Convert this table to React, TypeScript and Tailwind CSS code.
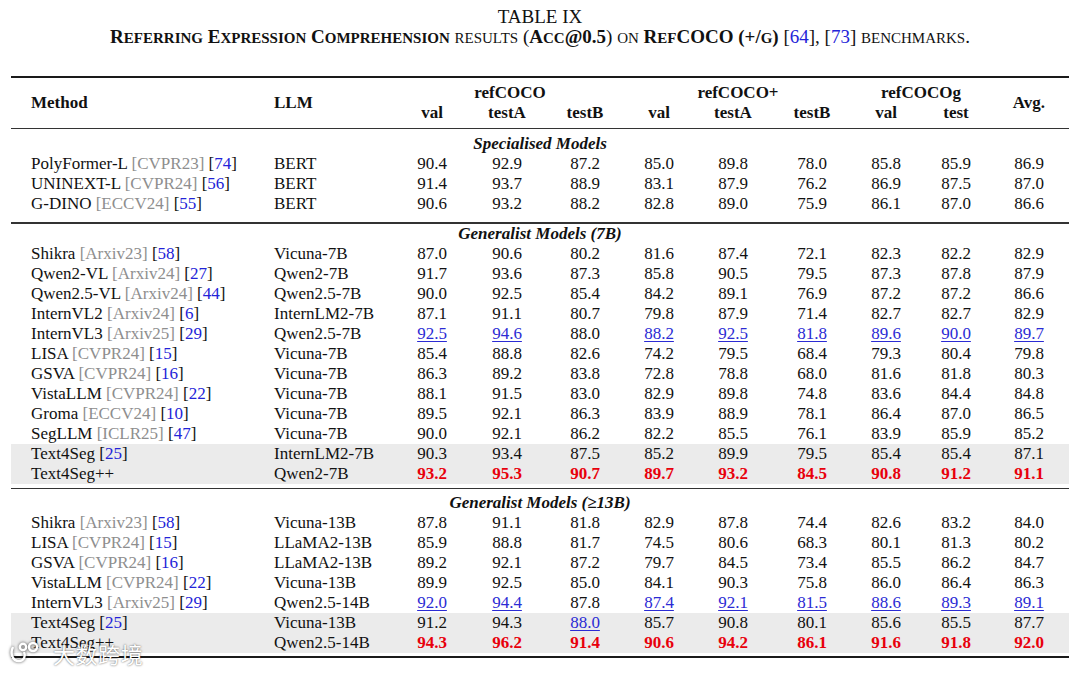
import React from 'react'

const GRID = 'grid grid-cols-[251px_133px_74px_76px_80px_68px_80px_78px_70px_70px_76px]'

type Row = {
  name: string
  venue?: string
  ref: string
  llm: string
  vals: string[]
  shade?: boolean
}

const specialised: Row[] = [
  { name: 'PolyFormer-L', venue: 'CVPR23', ref: '74', llm: 'BERT', vals: ['90.4', '92.9', '87.2', '85.0', '89.8', '78.0', '85.8', '85.9', '86.9'] },
  { name: 'UNINEXT-L', venue: 'CVPR24', ref: '56', llm: 'BERT', vals: ['91.4', '93.7', '88.9', '83.1', '87.9', '76.2', '86.9', '87.5', '87.0'] },
  { name: 'G-DINO', venue: 'ECCV24', ref: '55', llm: 'BERT', vals: ['90.6', '93.2', '88.2', '82.8', '89.0', '75.9', '86.1', '87.0', '86.6'] },
]

const general7b: Row[] = [
  { name: 'Shikra', venue: 'Arxiv23', ref: '58', llm: 'Vicuna-7B', vals: ['87.0', '90.6', '80.2', '81.6', '87.4', '72.1', '82.3', '82.2', '82.9'] },
  { name: 'Qwen2-VL', venue: 'Arxiv24', ref: '27', llm: 'Qwen2-7B', vals: ['91.7', '93.6', '87.3', '85.8', '90.5', '79.5', '87.3', '87.8', '87.9'] },
  { name: 'Qwen2.5-VL', venue: 'Arxiv24', ref: '44', llm: 'Qwen2.5-7B', vals: ['90.0', '92.5', '85.4', '84.2', '89.1', '76.9', '87.2', '87.2', '86.6'] },
  { name: 'InternVL2', venue: 'Arxiv24', ref: '6', llm: 'InternLM2-7B', vals: ['87.1', '91.1', '80.7', '79.8', '87.9', '71.4', '82.7', '82.7', '82.9'] },
  { name: 'InternVL3', venue: 'Arxiv25', ref: '29', llm: 'Qwen2.5-7B', vals: ['92.5u', '94.6u', '88.0', '88.2u', '92.5u', '81.8u', '89.6u', '90.0u', '89.7u'] },
  { name: 'LISA', venue: 'CVPR24', ref: '15', llm: 'Vicuna-7B', vals: ['85.4', '88.8', '82.6', '74.2', '79.5', '68.4', '79.3', '80.4', '79.8'] },
  { name: 'GSVA', venue: 'CVPR24', ref: '16', llm: 'Vicuna-7B', vals: ['86.3', '89.2', '83.8', '72.8', '78.8', '68.0', '81.6', '81.8', '80.3'] },
  { name: 'VistaLLM', venue: 'CVPR24', ref: '22', llm: 'Vicuna-7B', vals: ['88.1', '91.5', '83.0', '82.9', '89.8', '74.8', '83.6', '84.4', '84.8'] },
  { name: 'Groma', venue: 'ECCV24', ref: '10', llm: 'Vicuna-7B', vals: ['89.5', '92.1', '86.3', '83.9', '88.9', '78.1', '86.4', '87.0', '86.5'] },
  { name: 'SegLLM', venue: 'ICLR25', ref: '47', llm: 'Vicuna-7B', vals: ['90.0', '92.1', '86.2', '82.2', '85.5', '76.1', '83.9', '85.9', '85.2'] },
  { name: 'Text4Seg', ref: '25', llm: 'InternLM2-7B', shade: true, vals: ['90.3', '93.4', '87.5', '85.2', '89.9', '79.5', '85.4', '85.4', '87.1'] },
  { name: 'Text4Seg++', ref: '', llm: 'Qwen2-7B', shade: true, vals: ['93.2r', '95.3r', '90.7r', '89.7r', '93.2r', '84.5r', '90.8r', '91.2r', '91.1r'] },
]

const general13b: Row[] = [
  { name: 'Shikra', venue: 'Arxiv23', ref: '58', llm: 'Vicuna-13B', vals: ['87.8', '91.1', '81.8', '82.9', '87.8', '74.4', '82.6', '83.2', '84.0'] },
  { name: 'LISA', venue: 'CVPR24', ref: '15', llm: 'LLaMA2-13B', vals: ['85.9', '88.8', '81.7', '74.5', '80.6', '68.3', '80.1', '81.3', '80.2'] },
  { name: 'GSVA', venue: 'CVPR24', ref: '16', llm: 'LLaMA2-13B', vals: ['89.2', '92.1', '87.2', '79.7', '84.5', '73.4', '85.5', '86.2', '84.7'] },
  { name: 'VistaLLM', venue: 'CVPR24', ref: '22', llm: 'Vicuna-13B', vals: ['89.9', '92.5', '85.0', '84.1', '90.3', '75.8', '86.0', '86.4', '86.3'] },
  { name: 'InternVL3', venue: 'Arxiv25', ref: '29', llm: 'Qwen2.5-14B', vals: ['92.0u', '94.4u', '87.8', '87.4u', '92.1u', '81.5u', '88.6u', '89.3u', '89.1u'] },
  { name: 'Text4Seg', ref: '25', llm: 'Vicuna-13B', shade: true, vals: ['91.2', '94.3', '88.0u', '85.7', '90.8', '80.1', '85.6', '85.5', '87.7'] },
  { name: 'Text4Seg++', ref: '', llm: 'Qwen2.5-14B', shade: true, vals: ['94.3r', '96.2r', '91.4r', '90.6r', '94.2r', '86.1r', '91.6r', '91.8r', '92.0r'] },
]

// hand-made small caps: lower-case letters become smaller capitals
function SC({ text }: { text: string }) {
  const parts: { big: boolean; s: string }[] = []
  for (const ch of text) {
    const big = !(ch >= 'a' && ch <= 'z')
    const last = parts[parts.length - 1]
    if (last && last.big === big) last.s += ch
    else parts.push({ big, s: ch })
  }
  return (
    <>
      {parts.map((p, i) =>
        p.big ? <span key={i}>{p.s}</span> : <span key={i} className="text-[15px]">{p.s.toUpperCase()}</span>
      )}
    </>
  )
}

function Cell({ v }: { v: string }) {
  const mark = v.slice(-1)
  if (mark === 'u') {
    return <div className="text-center text-[#2b2bd4] underline underline-offset-2 decoration-1">{v.slice(0, -1)}</div>
  }
  if (mark === 'r') {
    return <div className="text-center font-bold text-[#e8000b]">{v.slice(0, -1)}</div>
  }
  return <div className="text-center">{v}</div>
}

function DataRow({ row }: { row: Row }) {
  return (
    <div className={`${GRID} h-5 leading-5 ${row.shade ? 'bg-[#ebebeb]' : ''}`}>
      <div className="pl-5 whitespace-nowrap">
        {row.name}
        {row.venue && <span className="text-[#8e8e8e]"> [{row.venue}]</span>}
        {row.ref && (
          <span>
            {' '}[<span className="text-[#2323d8]">{row.ref}</span>]
          </span>
        )}
      </div>
      <div className="pl-3 whitespace-nowrap">{row.llm}</div>
      {row.vals.map((v, i) => (
        <Cell key={i} v={v} />
      ))}
    </div>
  )
}

function SectionTitle({ children }: { children: React.ReactNode }) {
  return <div className="h-5 leading-5 text-center font-bold italic">{children}</div>
}

export default function App() {
  return (
    <div className="w-[1080px] h-[673px] bg-white text-[#111] font-['Liberation_Serif','Times_New_Roman',serif] text-[17px] relative overflow-hidden">
      {/* caption */}
      <div className="pt-[6px] text-center leading-[21px] text-[19px]">TABLE IX</div>
      <div className="text-center leading-5 text-[19px] whitespace-nowrap">
        <span className="font-bold"><SC text="Referring Expression Comprehension" /></span> <SC text="results" /> (
        <span className="font-bold"><SC text="Acc" />@0.5</span>) <SC text="on" /> <span className="font-bold"><SC text="RefCOCO (+/g)" /></span> [
        <span className="text-[#2323d8]">64</span>], [<span className="text-[#2323d8]">73</span>] <SC text="benchmarks." />
      </div>

      <div className="mx-[11px] mt-[28px]">
        <div className="h-[2px] bg-[#1a1a1a]" />

        {/* header */}
        <div className={`${GRID} pt-[5px] pb-[5px] font-bold leading-5`}>
          <div className="pl-5 row-span-2 self-center">Method</div>
          <div className="pl-3 row-span-2 self-center">LLM</div>
          <div className="col-span-3 text-center">refCOCO</div>
          <div className="col-span-3 text-center">refCOCO+</div>
          <div className="col-span-2 text-center">refCOCOg</div>
          <div className="row-span-2 self-center text-center">Avg.</div>
          <div className="text-center">val</div>
          <div className="text-center">testA</div>
          <div className="text-center">testB</div>
          <div className="text-center">val</div>
          <div className="text-center">testA</div>
          <div className="text-center">testB</div>
          <div className="text-center">val</div>
          <div className="text-center">test</div>
        </div>
        <div className="h-px bg-[#333]" />

        <div className="pt-[5px] pb-[8px]">
          <SectionTitle>Specialised Models</SectionTitle>
          {specialised.map((r, i) => (
            <DataRow key={i} row={r} />
          ))}
        </div>
        <div className="h-[1.5px] bg-[#333]" />

        <div className="pb-[4px]">
          <SectionTitle>Generalist Models (7B)</SectionTitle>
          {general7b.map((r, i) => (
            <DataRow key={i} row={r} />
          ))}
        </div>
        <div className="h-[1.5px] bg-[#333]" />

        <div className="pt-[4px] pb-[3px]">
          <SectionTitle>Generalist Models (≥13B)</SectionTitle>
          {general13b.map((r, i) => (
            <DataRow key={i} row={r} />
          ))}
        </div>
        <div className="h-[2px] bg-[#1a1a1a]" />
      </div>

      {/* watermark */}
      <div className="absolute left-[9px] top-[641px] flex items-center gap-2 text-white [text-shadow:0_0_2px_rgba(0,0,0,0.7)]">
        <svg width="36" height="24" viewBox="0 0 36 24" fill="none" stroke="white" strokeWidth="2.4" className="drop-shadow-[0_0_1.5px_rgba(0,0,0,0.7)]">
          <path d="M4 6 C1 12 3 20 10 20 C15 20 17 15 15 11" />
          <circle cx="14" cy="6" r="3.2" />
          <circle cx="24" cy="6" r="4" />
        </svg>
        <span className="font-['Noto_Sans_CJK_SC',sans-serif] text-[22px] leading-none tracking-wide">大数跨境</span>
      </div>
    </div>
  )
}
